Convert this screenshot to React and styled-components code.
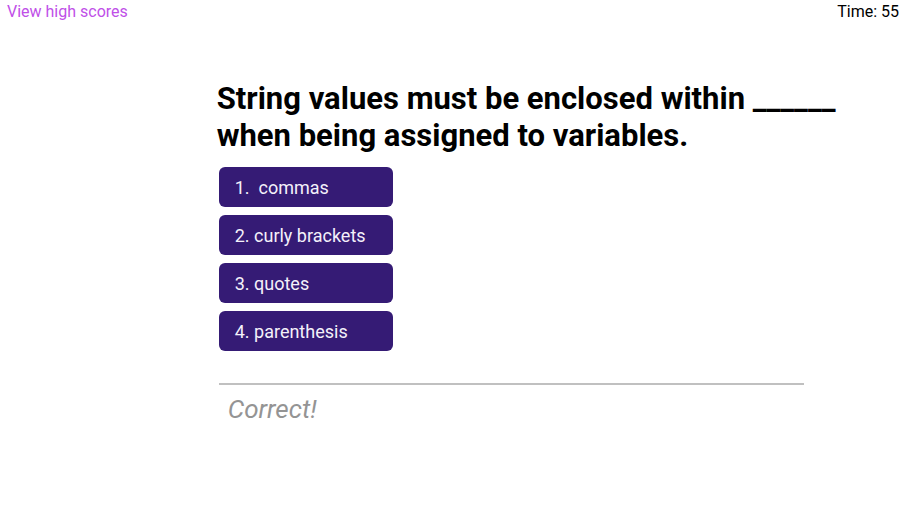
import React from "react";
import styled, { createGlobalStyle } from "styled-components";

const GlobalStyle = createGlobalStyle`
  * { box-sizing: border-box; }
  body {
    margin: 0;
    background: #ffffff;
    color: #000000;
    font-family: Roboto, "Liberation Sans", sans-serif;
    font-size: 16px;
  }
`;

const Header = styled.header`
  display: flex;
  justify-content: space-between;
  padding: 0 4px 0 7px;
  line-height: 24px;
`;

const ScoresLink = styled.a`
  color: #c04fe8;
  text-decoration: none;
`;

const Quiz = styled.main`
  width: 70%;
  margin: 56px 0 0 24%;
`;

const Question = styled.h1`
  margin: 0;
  font-size: 31px;
  line-height: 37px;
  font-weight: 700;
`;

const Choices = styled.ol`
  display: flex;
  flex-direction: column;
  align-items: flex-start;
  gap: 8px;
  list-style: none;
  margin: 13px 0 0 2px;
  padding: 0;
`;

const ChoiceItem = styled.li`
  display: flex;
`;

const Choice = styled.button`
  width: 174px;
  height: 40px;
  padding: 0 16px;
  border: 0;
  border-radius: 6px;
  background: #351b75;
  color: #f4f1fa;
  font: inherit;
  font-size: 18px;
  text-align: left;
  white-space: pre;
  cursor: pointer;
`;

const Feedback = styled.p`
  margin: 32px 45px 0 2px;
  padding: 8px 9px;
  border-top: 2px solid #c0c0c0;
  color: #949494;
  font-size: 26px;
  line-height: 32px;
  font-style: italic;
`;

const choices = ["1.  commas", "2. curly brackets", "3. quotes", "4. parenthesis"];

export default function App() {
  return (
    <>
      <GlobalStyle />
      <Header>
        <ScoresLink href="#scores">View high scores</ScoresLink>
        <span>Time: 55</span>
      </Header>
      <Quiz>
        <Question>
          String values must be enclosed within ______ when being assigned to variables.
        </Question>
        <Choices>
          {choices.map((choice) => (
            <ChoiceItem key={choice}>
              <Choice type="button">{choice}</Choice>
            </ChoiceItem>
          ))}
        </Choices>
        <Feedback role="status">Correct!</Feedback>
      </Quiz>
    </>
  );
}
